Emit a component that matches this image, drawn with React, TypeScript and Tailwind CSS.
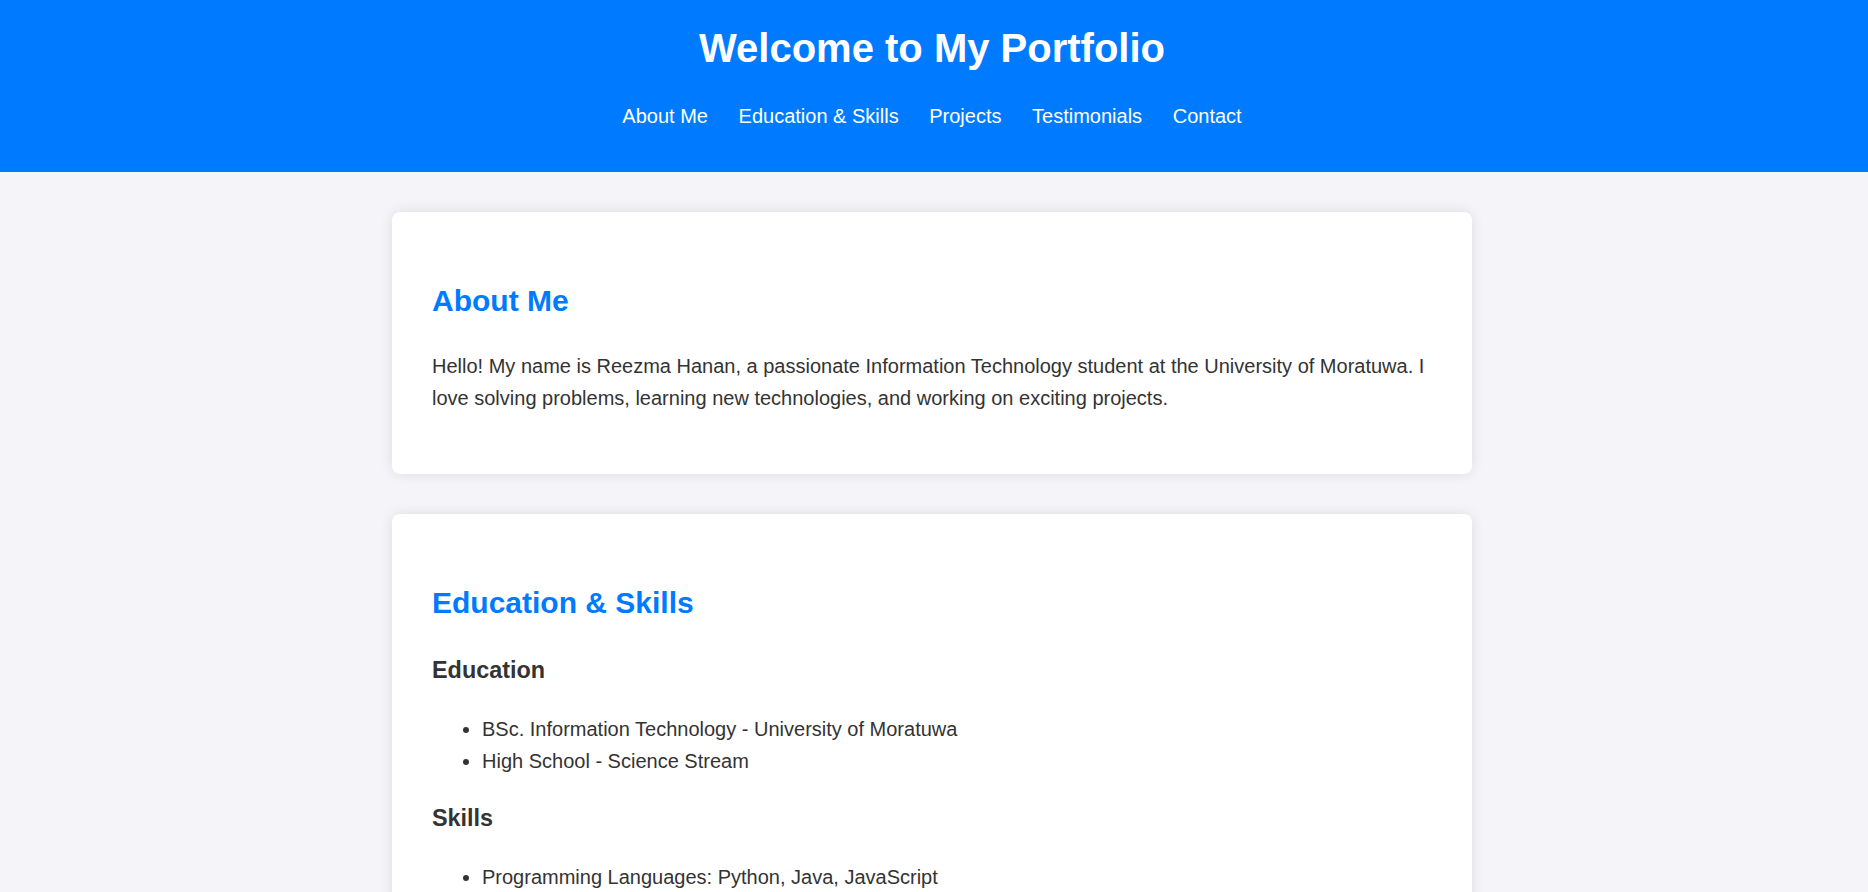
const navLinks = ["About Me", "Education & Skills", "Projects", "Testimonials", "Contact"];

function Card({ title, children }: { title: string; children: React.ReactNode }) {
  return (
    <section className="mx-auto w-[1080px] rounded-[8px] bg-white p-[40px] shadow-[0_0_12.5px_rgba(0,0,0,0.1)]">
      <h2 className="my-[25px] text-[30px] font-bold leading-[48px] text-[#007bff]">{title}</h2>
      {children}
    </section>
  );
}

function SubHeading({ children }: { children: React.ReactNode }) {
  return <h3 className="my-[23.4px] text-[23.4px] font-bold leading-[37.44px]">{children}</h3>;
}

function List({ items }: { items: string[] }) {
  return (
    <ul className="my-[23px] list-disc pl-[50px]">
      {items.map((item) => (
        <li key={item}>{item}</li>
      ))}
    </ul>
  );
}

export default function App() {
  return (
    <div className="min-h-screen bg-[#f4f4f9] text-[20px] leading-[1.6] text-[#333] [font-family:'Liberation_Sans',Arial,sans-serif]">
      <header className="bg-[#007bff] pr-1 pt-[16px] pb-[40px] text-center text-white">
        <h1 className="m-0 text-[40px] font-bold leading-[64px]">Welcome to My Portfolio</h1>
        <nav className="mt-[20px] flex justify-center gap-[30.6px] leading-[32px]">
          {navLinks.map((link) => (
            <a key={link} href="#" className="text-white no-underline">
              {link}
            </a>
          ))}
        </nav>
      </header>

      <main className="flex flex-col gap-[40px] pr-1 pt-[40px] pb-[40px]">
        <Card title="About Me">
          <p className="my-[20px] w-[1000px]">
            Hello! My name is Reezma Hanan, a passionate Information Technology student at the University of
            Moratuwa. I love solving problems, learning new technologies, and working on exciting projects.
          </p>
        </Card>

        <Card title="Education & Skills">
          <SubHeading>Education</SubHeading>
          <List items={["BSc. Information Technology - University of Moratuwa", "High School - Science Stream"]} />
          <SubHeading>Skills</SubHeading>
          <List items={["Programming Languages: Python, Java, JavaScript"]} />
        </Card>
      </main>
    </div>
  );
}
